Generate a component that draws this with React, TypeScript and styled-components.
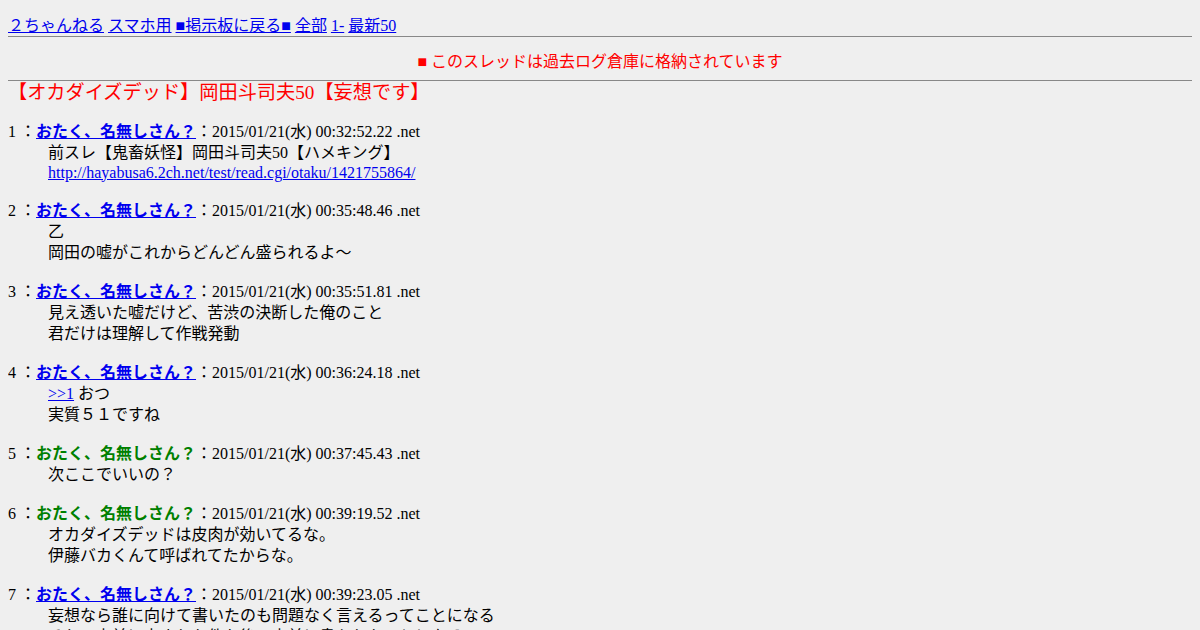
import React from "react";
import styled, { createGlobalStyle } from "styled-components";

const Global = createGlobalStyle`
  html, body { background: #efefef; }
  body {
    margin: 8px;
    color: #000;
    font-family: "Liberation Serif", "Noto Sans CJK JP", serif;
    font-size: 16px;
  }
  a { color: #0000ee; }
`;

const Header = styled.div`
  margin-top: 8px;
  line-height: 20px;
  white-space: nowrap;
`;

const Rule = styled.hr`
  border: 0;
  height: 1px;
  background: #888;
  margin: 0;
`;

const Notice = styled.div`
  color: #ff0000;
  text-align: center;
  line-height: 21px;
  margin-top: 13.5px;
  margin-bottom: 8px;
`;

const Title = styled.h1`
  color: #ff0000;
  font-size: 19.2px;
  font-weight: normal;
  line-height: 24px;
  margin: 0;
`;

const Thread = styled.dl`
  margin: 16px 0 0;
`;

const Head = styled.dt`
  line-height: 21px;
  white-space: nowrap;
`;

const Body = styled.dd`
  margin: 0 0 18px 40px;
`;

const Line = styled.div<{ $latin?: boolean }>`
  line-height: ${(p) => (p.$latin ? 19 : 21)}px;
  white-space: nowrap;
`;

const NameLink = styled.a`
  font-weight: bold;
`;

const NameGreen = styled.span`
  font-weight: bold;
  color: #008000;
`;

type Part = string | { href: string; text: string };
type Post = {
  no: number;
  green?: boolean;
  time: string;
  lines: (Part[] | string)[];
};

const posts: Post[] = [
  {
    no: 1,
    time: "00:32:52.22",
    lines: [
      "前スレ【鬼畜妖怪】岡田斗司夫50【ハメキング】",
      [
        {
          href: "#",
          text: "http://hayabusa6.2ch.net/test/read.cgi/otaku/1421755864/",
        },
      ],
    ],
  },
  { no: 2, time: "00:35:48.46", lines: ["乙", "岡田の嘘がこれからどんどん盛られるよ～"] },
  {
    no: 3,
    time: "00:35:51.81",
    lines: ["見え透いた嘘だけど、苦渋の決断した俺のこと", "君だけは理解して作戦発動"],
  },
  {
    no: 4,
    time: "00:36:24.18",
    lines: [[{ href: "#", text: ">>1" }, " おつ"], "実質５１ですね"],
  },
  { no: 5, green: true, time: "00:37:45.43", lines: ["次ここでいいの？"] },
  {
    no: 6,
    green: true,
    time: "00:39:19.52",
    lines: ["オカダイズデッドは皮肉が効いてるな。", "伊藤バカくんて呼ばれてたからな。"],
  },
  {
    no: 7,
    time: "00:39:23.05",
    lines: [
      "妄想なら誰に向けて書いたのも問題なく言えるってことになる",
      "それで事前に出された件も後で事前に書かれたことになる",
    ],
  },
];

const NAME = "おたく、名無しさん？";

export default function App() {
  return (
    <>
      <Global />
      <Header>
        <a href="#">２ちゃんねる</a> <a href="#">スマホ用</a>{" "}
        <a href="#">■掲示板に戻る■</a> <a href="#">全部</a>{" "}
        <a href="#">1-</a> <a href="#">最新50</a>
      </Header>
      <Rule />
      <Notice>■ このスレッドは過去ログ倉庫に格納されています</Notice>
      <Rule />
      <Title>【オカダイズデッド】岡田斗司夫50【妄想です】</Title>
      <Thread>
        {posts.map((p) => (
          <React.Fragment key={p.no}>
            <Head>
              {p.no} ：
              {p.green ? (
                <NameGreen>{NAME}</NameGreen>
              ) : (
                <NameLink href="#">{NAME}</NameLink>
              )}
              ：2015/01/21(水) {p.time} .net
            </Head>
            <Body>
              {p.lines.map((l, i) => {
                if (typeof l === "string") return <Line key={i}>{l}</Line>;
                const latin = l.length === 1 && typeof l[0] !== "string";
                return (
                  <Line key={i} $latin={latin}>
                    {l.map((part, j) =>
                      typeof part === "string" ? (
                        <React.Fragment key={j}>{part}</React.Fragment>
                      ) : (
                        <a key={j} href={part.href}>
                          {part.text}
                        </a>
                      )
                    )}
                  </Line>
                );
              })}
            </Body>
          </React.Fragment>
        ))}
      </Thread>
    </>
  );
}
